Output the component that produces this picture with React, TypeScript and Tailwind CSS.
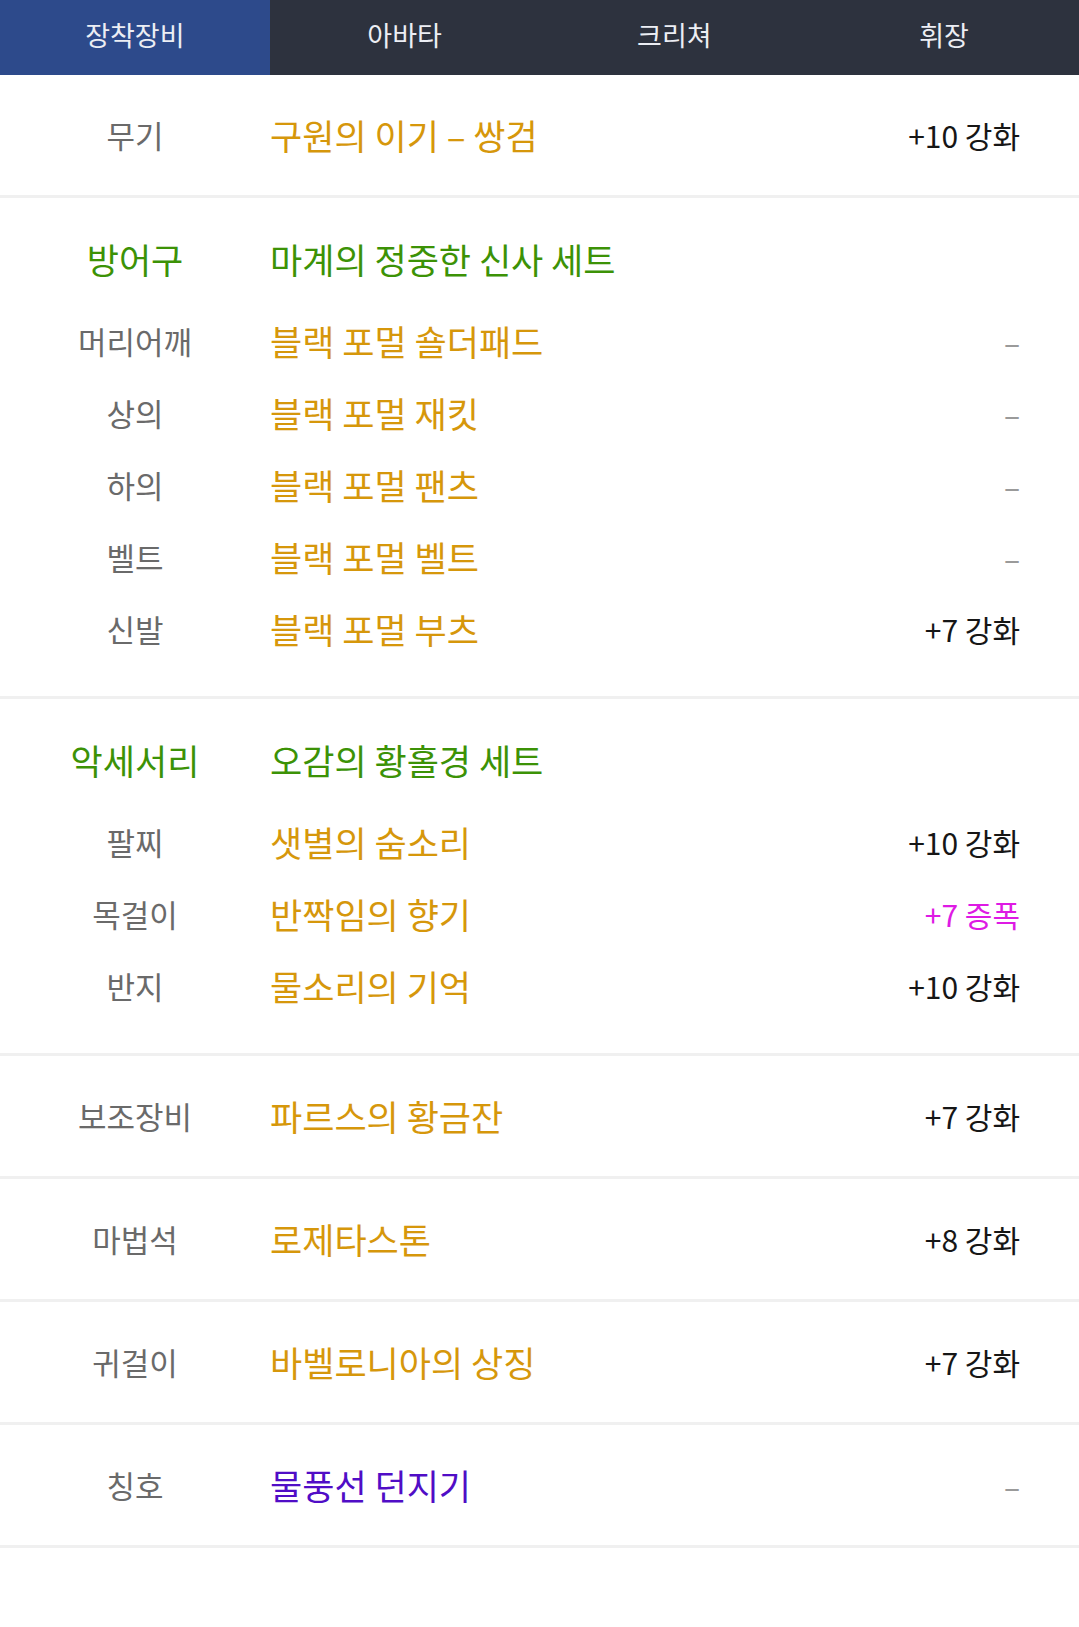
import React, { useState } from 'react';

type Item = {
  label: string;
  name: string;
  value?: string;
  nameColor?: string;
  valueColor?: string;
};

const tabs = ['장착장비', '아바타', '크리쳐', '휘장'];

const armor: Item[] = [
  { label: '머리어깨', name: '블랙 포멀 숄더패드' },
  { label: '상의', name: '블랙 포멀 재킷' },
  { label: '하의', name: '블랙 포멀 팬츠' },
  { label: '벨트', name: '블랙 포멀 벨트' },
  { label: '신발', name: '블랙 포멀 부츠', value: '+7 강화' },
];

const accessories: Item[] = [
  { label: '팔찌', name: '샛별의 숨소리', value: '+10 강화' },
  { label: '목걸이', name: '반짝임의 향기', value: '+7 증폭', valueColor: 'text-[#de1ae4]' },
  { label: '반지', name: '물소리의 기억', value: '+10 강화' },
];

const singles: Item[] = [
  { label: '보조장비', name: '파르스의 황금잔', value: '+7 강화' },
  { label: '마법석', name: '로제타스톤', value: '+8 강화' },
  { label: '귀걸이', name: '바벨로니아의 상징', value: '+7 강화' },
  { label: '칭호', name: '물풍선 던지기', nameColor: 'text-[#500dc6]' },
];

const Value: React.FC<{ value?: string; color?: string }> = ({ value, color }) =>
  value ? (
    <span className={`text-[30px] ${color ?? 'text-[#161616]'}`}>{value}</span>
  ) : (
    <span className="text-[30px] text-[#9a9a9a]">–</span>
  );

const Row: React.FC<{ item: Item; tall?: boolean }> = ({ item, tall }) => (
  <div className={`flex items-center pr-[59px] ${tall ? 'h-[120px]' : 'h-[72px]'}`}>
    <div className="w-[270px] shrink-0 text-center text-[31px] text-[#6a6a6a]">{item.label}</div>
    <div className={`flex-1 text-[35px] ${item.nameColor ?? 'text-[#d6970b]'}`}>{item.name}</div>
    <Value value={item.value} color={item.valueColor} />
  </div>
);

const SetSection: React.FC<{ title: string; setName: string; items: Item[] }> = ({ title, setName, items }) => (
  <section className="pt-[25px] pb-[31px]">
    <div className="flex h-[72px] items-center mb-[10px]">
      <div className="w-[270px] shrink-0 text-center text-[35px] text-[#3c9206]">{title}</div>
      <div className="text-[35px] text-[#3c9206]">{setName}</div>
    </div>
    {items.map((it) => (
      <Row key={it.label} item={it} />
    ))}
  </section>
);

const Divider = () => <div className="h-[3px] bg-[#f0f0f0]" />;

export default function App() {
  const [active, setActive] = useState(0);

  return (
    <div
      className="min-h-[1627px] bg-white"
      style={{ fontFamily: '"Noto Sans CJK KR", "Noto Sans", sans-serif' }}
    >
      {/* Tabs */}
      <nav className="grid grid-cols-4 h-[75px] bg-[#2d323e]">
        {tabs.map((t, i) => (
          <button
            key={t}
            onClick={() => setActive(i)}
            className={`flex items-center justify-center pb-[4px] text-[27px] text-[#eceef4] ${
              active === i ? 'bg-[#2d4a8b]' : ''
            }`}
          >
            {t}
          </button>
        ))}
      </nav>

      <Row item={{ label: '무기', name: '구원의 이기 – 쌍검', value: '+10 강화' }} tall />
      <Divider />

      <SetSection title="방어구" setName="마계의 정중한 신사 세트" items={armor} />
      <Divider />

      <SetSection title="악세서리" setName="오감의 황홀경 세트" items={accessories} />
      <Divider />

      {singles.map((it) => (
        <React.Fragment key={it.label}>
          <Row item={it} tall />
          <Divider />
        </React.Fragment>
      ))}
    </div>
  );
}
